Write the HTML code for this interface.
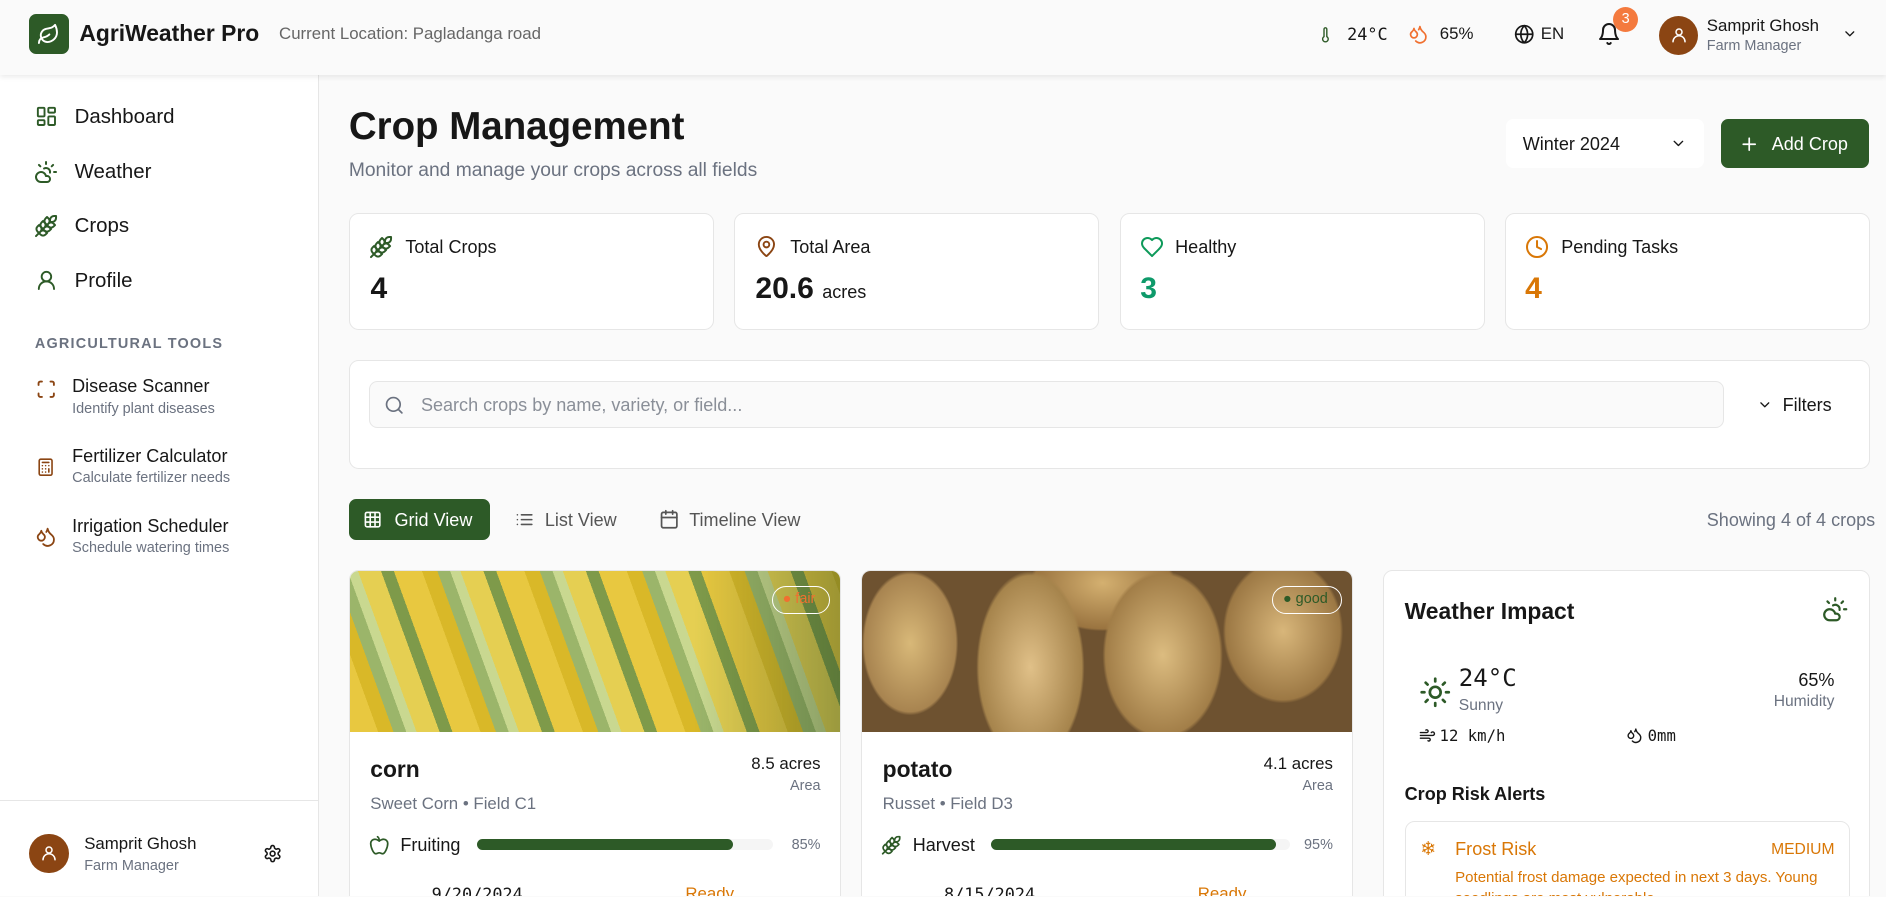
<!DOCTYPE html>
<html><head><meta charset="utf-8"><style>
*{box-sizing:border-box;margin:0;padding:0}
html,body{width:1886px;height:897px;overflow:hidden;background:#fafafa}
#r{position:relative;width:1568px;height:745px;zoom:1.20281;font-family:"Liberation Sans",sans-serif;color:#171717;overflow:hidden;background:#fafafa}
.a{position:absolute;white-space:nowrap}
svg{position:absolute;fill:none;stroke-linecap:round;stroke-linejoin:round}
.card{position:absolute;background:#fff;border:1px solid #e6e6e6;border-radius:8px}
.g{color:#6b7280}
.mono{font-family:"DejaVu Sans Mono","Liberation Mono",monospace}
</style></head><body><div id="r">
<!-- header -->
<div class="a" style="left:0;top:0;width:1568px;height:62px;background:#fafafa;box-shadow:0 2px 4px rgba(0,0,0,.08);z-index:2">
 <div class="a" style="left:24px;top:12px;width:33px;height:33px;background:#2d5a27;border-radius:6px"></div>
 <svg style="left:31px;top:19px" width="19" height="19" viewBox="0 0 24 24" stroke="#fff" stroke-width="2"><path d="M11 20A7 7 0 0 1 9.8 6.1C15.5 5 17 4.48 19 2c1 2 2 4.18 2 8 0 5.5-4.78 10-10 10Z"/><path d="M2 21c0-3 1.85-5.36 5.08-6C9.5 14.52 12 13 13 12"/></svg>
 <div class="a" style="left:66px;top:17px;font-size:19px;font-weight:bold">AgriWeather Pro</div>
 <div class="a g" style="left:232px;top:20px;font-size:14px;color:#666">Current Location: Pagladanga road</div>
 <svg style="left:1095px;top:20px" width="14" height="18" viewBox="0 0 24 24" stroke="#2d5a27" stroke-width="2"><path d="M14 4v10.54a4 4 0 1 1-4 0V4a2 2 0 0 1 4 0Z"/></svg>
 <div class="a mono" style="left:1120px;top:20px;font-size:14px">24°C</div>
 <svg style="left:1171px;top:20px" width="17" height="17" viewBox="0 0 24 24" stroke="#f07030" stroke-width="2"><path d="M7 16.3c2.2 0 4-1.83 4-4.05 0-1.16-.57-2.26-1.71-3.19S7.29 6.75 7 5.3c-.29 1.45-1.14 2.84-2.29 3.76S3 11.1 3 12.25c0 2.22 1.8 4.05 4 4.05z"/><path d="M12.56 6.6A10.97 10.97 0 0 0 14 3.02c.5 2.5 2 4.9 4 6.5s3 3.5 3 5.5a6.98 6.98 0 0 1-11.91 4.97"/></svg>
 <div class="a" style="left:1197px;top:20px;font-size:14px">65%</div>
 <svg style="left:1259px;top:20px" width="17" height="17" viewBox="0 0 24 24" stroke="#171717" stroke-width="2"><circle cx="12" cy="12" r="10"/><path d="M12 2a14.5 14.5 0 0 0 0 20 14.5 14.5 0 0 0 0-20M2 12h20"/></svg>
 <div class="a" style="left:1281px;top:20px;font-size:14px">EN</div>
 <svg style="left:1328px;top:18px" width="20" height="20" viewBox="0 0 24 24" stroke="#171717" stroke-width="2"><path d="M6 8a6 6 0 0 1 12 0c0 7 3 9 3 9H3s3-2 3-9M10.3 21a1.94 1.94 0 0 0 3.4 0"/></svg>
 <div class="a" style="left:1341px;top:6px;width:21px;height:21px;border-radius:50%;background:#f47a3e;color:#fff;font-size:12px;text-align:center;line-height:21px">3</div>
 <div class="a" style="left:1379px;top:13px;width:33px;height:33px;border-radius:50%;background:#8b4513"></div>
 <svg style="left:1388px;top:22px" width="15" height="15" viewBox="0 0 24 24" stroke="#fff" stroke-width="2"><circle cx="12" cy="8" r="4"/><path d="M20 21a8 8 0 0 0-16 0"/></svg>
 <div class="a" style="left:1419px;top:13px;font-size:14px">Samprit Ghosh</div>
 <div class="a g" style="left:1419px;top:32px;font-size:12px">Farm Manager</div>
 <svg style="left:1531px;top:22px" width="13" height="13" viewBox="0 0 24 24" stroke="#171717" stroke-width="2"><path d="m6 9 6 6 6-6"/></svg>
</div>
<!-- sidebar -->
<div class="a" style="left:0;top:62px;width:265px;height:683px;background:#fff;border-right:1px solid #e6e6e6">
 <svg style="left:29px;top:25px" width="19" height="19" viewBox="0 0 24 24" stroke="#2d5a27" stroke-width="2"><rect x="3" y="3" width="7" height="9" rx="1"/><rect x="14" y="3" width="7" height="5" rx="1"/><rect x="14" y="12" width="7" height="9" rx="1"/><rect x="3" y="16" width="7" height="5" rx="1"/></svg>
 <div class="a" style="left:62px;top:25px;font-size:17px">Dashboard</div>
 <svg style="left:28px;top:71px" width="20" height="20" viewBox="0 0 24 24" stroke="#2d5a27" stroke-width="2"><path d="M12 2v2M4.93 4.93l1.41 1.41M20 12h2M19.07 4.93l-1.41 1.41M15.947 12.65a4 4 0 0 0-5.925-4.128M13 22H7a5 5 0 1 1 4.9-6H13a3 3 0 0 1 0 6Z"/></svg>
 <div class="a" style="left:62px;top:71px;font-size:17px">Weather</div>
 <svg style="left:28px;top:116px" width="20" height="20" viewBox="0 0 24 24" stroke="#2d5a27" stroke-width="2"><path d="M2 22 16 8M3.47 12.53 5 11l1.53 1.53a3.5 3.5 0 0 1 0 4.94L5 19l-1.53-1.53a3.5 3.5 0 0 1 0-4.94ZM7.47 8.53 9 7l1.53 1.53a3.5 3.5 0 0 1 0 4.94L9 15l-1.53-1.53a3.5 3.5 0 0 1 0-4.94ZM11.47 4.53 13 3l1.53 1.53a3.5 3.5 0 0 1 0 4.94L13 11l-1.53-1.53a3.5 3.5 0 0 1 0-4.94ZM20 2h2v2a4 4 0 0 1-4 4h-2V6a4 4 0 0 1 4-4ZM11.47 17.47 13 19l-1.53 1.53a3.5 3.5 0 0 1-4.94 0L5 19l1.53-1.53a3.5 3.5 0 0 1 4.94 0ZM15.47 13.47 17 15l-1.53 1.53a3.5 3.5 0 0 1-4.94 0L9 15l1.53-1.53a3.5 3.5 0 0 1 4.94 0ZM19.47 9.47 21 11l-1.53 1.53a3.5 3.5 0 0 1-4.94 0L13 11l1.53-1.53a3.5 3.5 0 0 1 4.94 0Z"/></svg>
 <div class="a" style="left:62px;top:116px;font-size:17px">Crops</div>
 <svg style="left:29px;top:162px" width="19" height="19" viewBox="0 0 24 24" stroke="#2d5a27" stroke-width="2"><circle cx="12" cy="8" r="5"/><path d="M20 21a8 8 0 0 0-16 0"/></svg>
 <div class="a" style="left:62px;top:162px;font-size:17px">Profile</div>
 <div class="a g" style="left:29px;top:217px;font-size:12px;font-weight:bold;letter-spacing:1px">AGRICULTURAL TOOLS</div>
 <svg style="left:30px;top:253px" width="17" height="17" viewBox="0 0 24 24" stroke="#8b4513" stroke-width="2.2"><path d="M3 7V5a2 2 0 0 1 2-2h2M17 3h2a2 2 0 0 1 2 2v2M21 17v2a2 2 0 0 1-2 2h-2M7 21H5a2 2 0 0 1-2-2v-2"/></svg>
 <div class="a" style="left:60px;top:251px;font-size:15px">Disease Scanner</div>
 <div class="a g" style="left:60px;top:271px;font-size:12px">Identify plant diseases</div>
 <svg style="left:30px;top:318px" width="16" height="17" viewBox="0 0 24 24" stroke="#8b4513" stroke-width="2"><rect x="4" y="2" width="16" height="20" rx="2"/><path d="M8 6h8M16 14v4M16 10h.01M12 10h.01M8 10h.01M12 14h.01M8 14h.01M12 18h.01M8 18h.01"/></svg>
 <div class="a" style="left:60px;top:309px;font-size:15px">Fertilizer Calculator</div>
 <div class="a g" style="left:60px;top:329px;font-size:12px">Calculate fertilizer needs</div>
 <svg style="left:29px;top:375px" width="18" height="18" viewBox="0 0 24 24" stroke="#8b4513" stroke-width="2"><path d="M7 16.3c2.2 0 4-1.83 4-4.05 0-1.16-.57-2.26-1.71-3.19S7.29 6.75 7 5.3c-.29 1.45-1.14 2.84-2.29 3.76S3 11.1 3 12.25c0 2.22 1.8 4.05 4 4.05z"/><path d="M12.56 6.6A10.97 10.97 0 0 0 14 3.02c.5 2.5 2 4.9 4 6.5s3 3.5 3 5.5a6.98 6.98 0 0 1-11.91 4.97"/></svg>
 <div class="a" style="left:60px;top:367px;font-size:15px">Irrigation Scheduler</div>
 <div class="a g" style="left:60px;top:387px;font-size:12px">Schedule watering times</div>
 <div class="a" style="left:0;top:603px;width:264px;border-top:1px solid #e6e6e6"></div>
 <div class="a" style="left:24px;top:631px;width:33px;height:33px;border-radius:50%;background:#8b4513"></div>
 <svg style="left:33px;top:640px" width="15" height="15" viewBox="0 0 24 24" stroke="#fff" stroke-width="2"><circle cx="12" cy="8" r="4"/><path d="M20 21a8 8 0 0 0-16 0"/></svg>
 <div class="a" style="left:70px;top:631px;font-size:14px">Samprit Ghosh</div>
 <div class="a g" style="left:70px;top:651px;font-size:12px">Farm Manager</div>
 <svg style="left:219px;top:640px" width="16" height="16" viewBox="0 0 24 24" stroke="#171717" stroke-width="2"><path d="M12.22 2h-.44a2 2 0 0 0-2 2v.18a2 2 0 0 1-1 1.73l-.43.25a2 2 0 0 1-2 0l-.15-.08a2 2 0 0 0-2.73.73l-.22.38a2 2 0 0 0 .73 2.73l.15.1a2 2 0 0 1 1 1.72v.51a2 2 0 0 1-1 1.74l-.15.09a2 2 0 0 0-.73 2.73l.22.38a2 2 0 0 0 2.73.73l.15-.08a2 2 0 0 1 2 0l.43.25a2 2 0 0 1 1 1.73V20a2 2 0 0 0 2 2h.44a2 2 0 0 0 2-2v-.18a2 2 0 0 1 1-1.73l.43-.25a2 2 0 0 1 2 0l.15.08a2 2 0 0 0 2.73-.73l.22-.39a2 2 0 0 0-.73-2.73l-.15-.08a2 2 0 0 1-1-1.74v-.5a2 2 0 0 1 1-1.74l.15-.09a2 2 0 0 0 .73-2.730l-.22-.38a2 2 0 0 0-2.73-.73l-.15.08a2 2 0 0 1-2 0l-.43-.25a2 2 0 0 1-1-1.73V4a2 2 0 0 0-2-2z"/><circle cx="12" cy="12" r="3"/></svg>
</div>
<!-- main -->
<div class="a" style="left:290px;top:87px;font-size:32px;font-weight:bold">Crop Management</div>
<div class="a g" style="left:290px;top:133px;font-size:16px">Monitor and manage your crops across all fields</div>
<div class="a" style="left:1252px;top:99px;width:165px;height:41px;background:#fff;border-radius:6px"></div>
<div class="a" style="left:1266px;top:111px;font-size:15px">Winter 2024</div>
<svg style="left:1388px;top:112px" width="14" height="14" viewBox="0 0 24 24" stroke="#171717" stroke-width="2"><path d="m6 9 6 6 6-6"/></svg>
<div class="a" style="left:1431px;top:99px;width:123px;height:41px;background:#2d5a27;border-radius:6px"></div>
<svg style="left:1446px;top:111px" width="17" height="17" viewBox="0 0 24 24" stroke="#fff" stroke-width="2"><path d="M5 12h14M12 5v14"/></svg>
<div class="a" style="left:1473px;top:111px;font-size:15px;color:#fff">Add Crop</div>

<div class="card" style="left:290px;top:177px;width:304px;height:97px"></div>
<div class="card" style="left:610px;top:177px;width:304px;height:97px"></div>
<div class="card" style="left:931px;top:177px;width:304px;height:97px"></div>
<div class="card" style="left:1251px;top:177px;width:304px;height:97px"></div>
<svg style="left:307px;top:195px" width="20" height="20" viewBox="0 0 24 24" stroke="#2d5a27" stroke-width="2"><path d="M2 22 16 8M3.47 12.53 5 11l1.53 1.53a3.5 3.5 0 0 1 0 4.94L5 19l-1.53-1.53a3.5 3.5 0 0 1 0-4.94ZM7.47 8.53 9 7l1.53 1.53a3.5 3.5 0 0 1 0 4.94L9 15l-1.53-1.53a3.5 3.5 0 0 1 0-4.94ZM11.47 4.53 13 3l1.53 1.53a3.5 3.5 0 0 1 0 4.94L13 11l-1.53-1.53a3.5 3.5 0 0 1 0-4.94ZM20 2h2v2a4 4 0 0 1-4 4h-2V6a4 4 0 0 1 4-4ZM11.47 17.47 13 19l-1.53 1.53a3.5 3.5 0 0 1-4.94 0L5 19l1.53-1.53a3.5 3.5 0 0 1 4.94 0ZM15.47 13.47 17 15l-1.53 1.53a3.5 3.5 0 0 1-4.94 0L9 15l1.53-1.53a3.5 3.5 0 0 1 4.94 0ZM19.47 9.47 21 11l-1.53 1.53a3.5 3.5 0 0 1-4.94 0L13 11l1.53-1.53a3.5 3.5 0 0 1 4.94 0Z"/></svg>
<div class="a" style="left:337px;top:197px;font-size:15px">Total Crops</div>
<div class="a" style="left:308px;top:226px;font-size:25px;font-weight:bold">4</div>
<svg style="left:628px;top:195px" width="19" height="19" viewBox="0 0 24 24" stroke="#8b4513" stroke-width="2"><path d="M20 10c0 4.99-5.54 10.19-7.4 11.8a1 1 0 0 1-1.2 0C9.54 20.19 4 14.99 4 10a8 8 0 0 1 16 0"/><circle cx="12" cy="10" r="3"/></svg>
<div class="a" style="left:657px;top:197px;font-size:15px">Total Area</div>
<div class="a" style="left:628px;top:226px;font-size:25px;font-weight:bold">20.6 <span style="font-size:15px;font-weight:normal">acres</span></div>
<svg style="left:948px;top:195px" width="20" height="20" viewBox="0 0 24 24" stroke="#0e9a5a" stroke-width="2"><path d="M19 14c1.49-1.46 3-3.21 3-5.5A5.5 5.5 0 0 0 16.5 3c-1.76 0-3 .5-4.5 2-1.5-1.5-2.74-2-4.5-2A5.5 5.5 0 0 0 2 8.5c0 2.3 1.5 4.05 3 5.5l7 7Z"/></svg>
<div class="a" style="left:977px;top:197px;font-size:15px">Healthy</div>
<div class="a" style="left:948px;top:226px;font-size:25px;font-weight:bold;color:#0e9a6a">3</div>
<svg style="left:1268px;top:195px" width="20" height="20" viewBox="0 0 24 24" stroke="#d97706" stroke-width="2"><circle cx="12" cy="12" r="10"/><path d="M12 6v6l4 2"/></svg>
<div class="a" style="left:1298px;top:197px;font-size:15px">Pending Tasks</div>
<div class="a" style="left:1268px;top:226px;font-size:25px;font-weight:bold;color:#d97706">4</div>

<div class="card" style="left:290px;top:299px;width:1265px;height:91px"></div>
<div class="a" style="left:307px;top:317px;width:1126px;height:39px;background:#fafafa;border:1px solid #e6e6e6;border-radius:7px"></div>
<svg style="left:319px;top:328px" width="17" height="17" viewBox="0 0 24 24" stroke="#6b7280" stroke-width="2"><circle cx="11" cy="11" r="8"/><path d="m21 21-4.3-4.3"/></svg>
<div class="a" style="left:350px;top:328px;font-size:15px;color:#8a8f98">Search crops by name, variety, or field...</div>
<svg style="left:1461px;top:330px" width="13" height="13" viewBox="0 0 24 24" stroke="#171717" stroke-width="2"><path d="m6 9 6 6 6-6"/></svg>
<div class="a" style="left:1482px;top:328px;font-size:15px">Filters</div>

<div class="a" style="left:290px;top:415px;width:117px;height:34px;background:#2d5a27;border-radius:6px"></div>
<svg style="left:302px;top:424px" width="16" height="16" viewBox="0 0 24 24" stroke="#fff" stroke-width="2"><rect x="3" y="3" width="18" height="18" rx="2"/><path d="M3 9h18M3 15h18M9 3v18M15 3v18"/></svg>
<div class="a" style="left:328px;top:424px;font-size:15px;color:#fff">Grid View</div>
<svg style="left:428px;top:424px" width="16" height="16" viewBox="0 0 24 24" stroke="#555" stroke-width="2"><path d="M3 12h.01M3 18h.01M3 6h.01M8 12h13M8 18h13M8 6h13"/></svg>
<div class="a" style="left:453px;top:424px;font-size:15px;color:#555">List View</div>
<svg style="left:548px;top:423px" width="17" height="17" viewBox="0 0 24 24" stroke="#555" stroke-width="2"><rect x="3" y="4" width="18" height="18" rx="2"/><path d="M16 2v4M8 2v4M3 10h18"/></svg>
<div class="a" style="left:573px;top:424px;font-size:15px;color:#555">Timeline View</div>
<div class="a g" style="left:1419px;top:424px;font-size:15px">Showing 4 of 4 crops</div>

<!-- crop cards -->
<div class="card" style="left:290px;top:474px;width:409px;height:290px;overflow:hidden">
 <div class="a" style="left:0;top:0;width:409px;height:134px;background:linear-gradient(90deg,rgba(0,0,0,0) 70%,rgba(40,70,30,.4)),repeating-linear-gradient(70deg,#e8c840 0 22px,#d9b828 22px 34px,#9bb56a 34px 44px,#c9d890 44px 52px,#e5cf52 52px 70px,#7e9a4a 70px 80px)"></div>
 <div class="a" style="left:351px;top:12px;width:48px;height:24px;border:1px solid #fff;border-radius:12px;font-size:12px;color:#f07030;padding:4px 0 0 8px">● fair</div>
 <div class="a" style="left:17px;top:154px;font-size:19px;font-weight:bold">corn</div>
 <div class="a" style="right:16px;top:152px;font-size:14px">8.5 acres</div>
 <div class="a g" style="right:16px;top:172px;font-size:12px">Area</div>
 <div class="a g" style="left:17px;top:185px;font-size:14px">Sweet Corn • Field C1</div>
 <svg style="left:16px;top:219px" width="17" height="17" viewBox="0 0 24 24" stroke="#2d5a27" stroke-width="2"><path d="M12 20.94c1.5 0 2.75 1.06 4 1.06 3 0 6-8 6-12.22A4.91 4.91 0 0 0 17 5c-2.22 0-4 1.44-5 2-1-.56-2.78-2-5-2a4.9 4.9 0 0 0-5 4.78C2 14 5 22 8 22c1.25 0 2.5-1.06 4-1.06Z"/><path d="M10 2c1 .5 2 2 2 5"/></svg>
 <div class="a" style="left:42px;top:219px;font-size:15px">Fruiting</div>
 <div class="a" style="left:106px;top:223px;height:9px;background:#f5f5f5;border-radius:5px;width:246px"></div>
 <div class="a" style="left:106px;top:223px;width:213px;height:9px;background:#2d5a27;border-radius:5px"></div>
 <div class="a g" style="right:16px;top:221px;font-size:12px">85%</div>
 <div class="a mono" style="left:68px;top:260px;font-size:14px">9/20/2024</div>
 <div class="a" style="left:279px;top:260px;font-size:14px;color:#d97706">Ready</div>
</div>
<div class="card" style="left:716px;top:474px;width:409px;height:290px;overflow:hidden">
 <div class="a" style="left:0;top:0;width:409px;height:134px;background:radial-gradient(ellipse 40px 60px at 40px 60px,#d8b878,#a88450 95%,transparent),radial-gradient(ellipse 45px 80px at 140px 80px,#e0c088,#a6844c 95%,transparent),radial-gradient(ellipse 50px 70px at 250px 70px,#dcbc80,#a27e48 95%,transparent),radial-gradient(ellipse 50px 60px at 350px 50px,#d8b67a,#9c7844 95%,transparent),radial-gradient(ellipse 60px 40px at 200px 10px,#d4b070,#9a7440 95%,transparent),#6e5230"></div>
 <div class="a" style="left:341px;top:12px;width:58px;height:24px;border:1px solid #fff;border-radius:12px;font-size:12px;color:#2d5a27;padding:4px 0 0 8px">● good</div>
 <div class="a" style="left:17px;top:154px;font-size:19px;font-weight:bold">potato</div>
 <div class="a" style="right:16px;top:152px;font-size:14px">4.1 acres</div>
 <div class="a g" style="right:16px;top:172px;font-size:12px">Area</div>
 <div class="a g" style="left:17px;top:185px;font-size:14px">Russet • Field D3</div>
 <svg style="left:16px;top:219px" width="17" height="17" viewBox="0 0 24 24" stroke="#2d5a27" stroke-width="2"><path d="M2 22 16 8M3.47 12.53 5 11l1.53 1.53a3.5 3.5 0 0 1 0 4.94L5 19l-1.53-1.53a3.5 3.5 0 0 1 0-4.94ZM7.47 8.53 9 7l1.53 1.53a3.5 3.5 0 0 1 0 4.94L9 15l-1.53-1.53a3.5 3.5 0 0 1 0-4.94ZM11.47 4.53 13 3l1.53 1.53a3.5 3.5 0 0 1 0 4.94L13 11l-1.53-1.53a3.5 3.5 0 0 1 0-4.94ZM20 2h2v2a4 4 0 0 1-4 4h-2V6a4 4 0 0 1 4-4ZM11.47 17.47 13 19l-1.53 1.53a3.5 3.5 0 0 1-4.94 0L5 19l1.53-1.53a3.5 3.5 0 0 1 4.94 0ZM15.47 13.47 17 15l-1.53 1.53a3.5 3.5 0 0 1-4.94 0L9 15l1.53-1.53a3.5 3.5 0 0 1 4.94 0ZM19.47 9.47 21 11l-1.53 1.53a3.5 3.5 0 0 1-4.94 0L13 11l1.53-1.53a3.5 3.5 0 0 1 4.94 0Z"/></svg>
 <div class="a" style="left:42px;top:219px;font-size:15px">Harvest</div>
 <div class="a" style="left:107px;top:223px;height:9px;background:#f5f5f5;border-radius:5px;width:249px"></div>
 <div class="a" style="left:107px;top:223px;width:237px;height:9px;background:#2d5a27;border-radius:5px"></div>
 <div class="a g" style="right:16px;top:221px;font-size:12px">95%</div>
 <div class="a mono" style="left:68px;top:260px;font-size:14px">8/15/2024</div>
 <div class="a" style="left:279px;top:260px;font-size:14px;color:#d97706">Ready</div>
</div>
<!-- weather impact -->
<div class="card" style="left:1150px;top:474px;width:405px;height:290px;overflow:hidden">
 <div class="a" style="left:17px;top:22px;font-size:19px;font-weight:bold">Weather Impact</div>
 <svg style="left:364px;top:21px" width="22" height="22" viewBox="0 0 24 24" stroke="#2d5a27" stroke-width="2"><path d="M12 2v2M4.93 4.93l1.41 1.41M20 12h2M19.07 4.93l-1.41 1.41M15.947 12.65a4 4 0 0 0-5.925-4.128M13 22H7a5 5 0 1 1 4.9-6H13a3 3 0 0 1 0 6Z"/></svg>
 <svg style="left:29px;top:87px" width="27" height="27" viewBox="0 0 24 24" stroke="#2d5a27" stroke-width="2"><circle cx="12" cy="12" r="4"/><path d="M12 2v2M12 20v2M4.93 4.93l1.41 1.41M17.66 17.66l1.41 1.41M2 12h2M20 12h2M6.34 17.66l-1.41 1.41M19.07 4.93l-1.41 1.41"/></svg>
 <div class="a mono" style="left:62px;top:77px;font-size:20px">24°C</div>
 <div class="a g" style="left:62px;top:105px;font-size:13px">Sunny</div>
 <div class="a" style="right:29px;top:82px;font-size:15px">65%</div>
 <div class="a g" style="right:29px;top:101px;font-size:13px">Humidity</div>
 <svg style="left:29px;top:130px" width="14" height="14" viewBox="0 0 24 24" stroke="#171717" stroke-width="2"><path d="M12.8 19.6A2 2 0 1 0 14 16H2M17.5 8a2.5 2.5 0 1 1 2 4H2M9.8 4.4A2 2 0 1 1 11 8H2"/></svg>
 <div class="a mono" style="left:46px;top:129px;font-size:13px">12 km/h</div>
 <svg style="left:201px;top:130px" width="14" height="14" viewBox="0 0 24 24" stroke="#171717" stroke-width="2"><path d="M7 16.3c2.2 0 4-1.83 4-4.05 0-1.16-.57-2.26-1.71-3.19S7.29 6.75 7 5.3c-.29 1.45-1.14 2.84-2.29 3.76S3 11.1 3 12.25c0 2.22 1.8 4.05 4 4.05z"/><path d="M12.56 6.6A10.97 10.97 0 0 0 14 3.02c.5 2.5 2 4.9 4 6.5s3 3.5 3 5.5a6.98 6.98 0 0 1-11.91 4.97"/></svg>
 <div class="a mono" style="left:219px;top:129px;font-size:13px">0mm</div>
 <div class="a" style="left:17px;top:177px;font-size:15px;font-weight:bold">Crop Risk Alerts</div>
 <div class="a" style="left:17px;top:208px;width:370px;height:120px;border:1px solid #e6e6e6;border-radius:8px;background:#fff"></div>
 <div class="a" style="left:30px;top:221px;font-size:16px;color:#d97706">❄</div>
 <div class="a" style="left:59px;top:223px;font-size:15px;color:#d97706">Frost Risk</div>
 <div class="a" style="right:29px;top:224px;font-size:13px;color:#d97706">MEDIUM</div>
 <div class="a" style="left:59px;top:247px;font-size:12.5px;color:#d97706;line-height:17px">Potential frost damage expected in next 3 days. Young<br>seedlings are most vulnerable.</div>
</div>
</div></body></html>
